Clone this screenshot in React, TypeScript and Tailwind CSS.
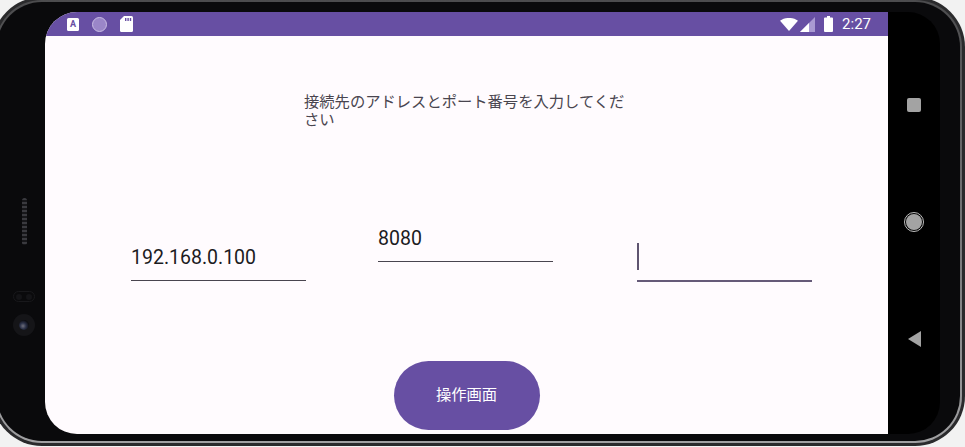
import React from "react";

const fontStack = "font-['Roboto','Noto_Sans_CJK_JP',sans-serif]";

function Field({ value, focused, className }: { value?: string; focused?: boolean; className: string }) {
  return (
    <div className={`w-[175px] shrink-0 ${className}`}>
      <div className="flex h-[44px] items-center pb-px">
        {focused ? (
          <div className="mb-[3px] h-[27px] w-[2px] bg-[#5f5470]" />
        ) : (
          <span className="text-[19.5px] leading-[22px] text-[#1c1b1f]">{value}</span>
        )}
      </div>
      <div className={focused ? "h-[2px] bg-[#655a78]" : "h-px bg-[#49454f]"} />
    </div>
  );
}

function StatusBar() {
  return (
    <div className="flex h-[24px] shrink-0 items-center bg-[#674fa3] pl-[22px] pr-[17px]">
      <div className="flex h-[13px] w-[12px] items-center justify-center rounded-[1.5px] bg-white text-[9px] font-bold leading-none text-[#674fa3]">
        A
      </div>
      <div className="ml-[13px] h-[15px] w-[15px] rounded-full border border-[#c9bde3] bg-[#9a86c8]" />
      <svg className="ml-[13px]" width="13" height="16" viewBox="0 0 13 16">
        <path d="M4 0H11.5A1.5 1.5 0 0 1 13 1.5V14.5A1.5 1.5 0 0 1 11.5 16H1.5A1.5 1.5 0 0 1 0 14.5V4Z" fill="#fff" />
        <path d="M5 2h1.4v3H5zM7.4 2h1.4v3H7.4zM9.8 2h1.4v3H9.8z" fill="#674fa3" />
      </svg>
      <div className="ml-auto flex items-center">
        <svg width="18" height="13" viewBox="0 0 18 13">
          <path d="M0 2.8C5-1 13-1 18 2.8L9 13Z" fill="#fff" />
        </svg>
        <svg className="ml-[2px]" width="15" height="15" viewBox="0 0 15 15">
          <path d="M15 0V15H0Z" fill="#a999d2" />
          <path d="M9 6V15H0Z" fill="#fff" />
        </svg>
        <svg className="ml-[9px]" width="9" height="16" viewBox="0 0 9 16">
          <path d="M3 0H6V1.5H8A1 1 0 0 1 9 2.5V15A1 1 0 0 1 8 16H1A1 1 0 0 1 0 15V2.5A1 1 0 0 1 1 1.5H3Z" fill="#fff" />
        </svg>
        <span className="ml-[9px] text-[15px] leading-none text-white">2:27</span>
      </div>
    </div>
  );
}

function LeftBezel() {
  return (
    <div className="flex w-[42px] shrink-0 flex-col items-center pt-[186px]">
      <div className="ml-px h-[47px] w-[5px] rounded-full bg-[repeating-linear-gradient(180deg,#3a3a3f_0px,#3a3a3f_2px,#17171a_2px,#17171a_4px)]" />
      <div className="mt-[46px] flex h-[11px] w-[22px] items-center justify-between rounded-full border border-[#18181b] px-[2px]">
        <div className="h-[6px] w-[6px] rounded-full bg-[#141417]" />
        <div className="h-[6px] w-[6px] rounded-full bg-[#141417]" />
      </div>
      <div className="mt-[12px] flex h-[22px] w-[22px] items-center justify-center rounded-full bg-[#151518]">
        <div className="h-[10px] w-[10px] rounded-full bg-[radial-gradient(circle_at_40%_60%,#6f6f7c_0px,#2b3148_3px,#0b0b10_6px)]" />
      </div>
    </div>
  );
}

function NavPanel() {
  return (
    <div className="flex w-[52px] shrink-0 flex-col items-center rounded-r-[32px] bg-black pt-[86px]">
      <div className="h-[14px] w-[14px] rounded-[2px] bg-[#a3a3a3]" />
      <div className="mt-[100px] flex h-[20px] w-[20px] items-center justify-center rounded-full border border-[#bdbdbd]">
        <div className="h-[16px] w-[16px] rounded-full bg-[#a3a3a3]" />
      </div>
      <svg className="mt-[99px]" width="13" height="16" viewBox="0 0 13 16">
        <path d="M13 0V16L0 8Z" fill="#a3a3a3" />
      </svg>
    </div>
  );
}

export default function App() {
  return (
    <div className={`h-[447px] w-[965px] overflow-hidden bg-[#f2f2f2] ${fontStack}`}>
      {/* device frame, runs a bit past the window */}
      <div className="ml-[-8px] mt-[-3px] h-[449px] w-[973px] rounded-[50px] bg-[#2a2a2c] p-[3px]">
        <div className="h-full w-full rounded-[47px] bg-linear-to-b from-[#4c4c4e] to-[#a0a0a2] p-[2px]">
          <div className="h-full w-full rounded-[45px] bg-[#0a0a0c] pb-[7px] pl-[6px] pr-[20px] pt-[10px]">
            <div className="flex h-full">
              <LeftBezel />
              <div className="flex min-w-0 flex-1 flex-col overflow-hidden rounded-l-[32px] bg-[#fffbfe]">
                <StatusBar />
                <div className="ml-[259px] mt-[57px] w-[323px] text-[15.3px] leading-[18px] text-[#49454f]">
                  接続先のアドレスとポート番号を入力してください
                </div>
                <div className="mt-[88px] flex pl-[86px]">
                  <Field value="192.168.0.100" className="mt-[19px]" />
                  <Field value="8080" className="ml-[72px]" />
                  <Field focused className="ml-[84px] mt-[19px]" />
                </div>
                <div className="mt-[79px] flex justify-center">
                  <button className="h-[69px] w-[146px] rounded-full bg-[#674fa3] text-[15.3px] text-white">
                    操作画面
                  </button>
                </div>
              </div>
              <NavPanel />
            </div>
          </div>
        </div>
      </div>
    </div>
  );
}
